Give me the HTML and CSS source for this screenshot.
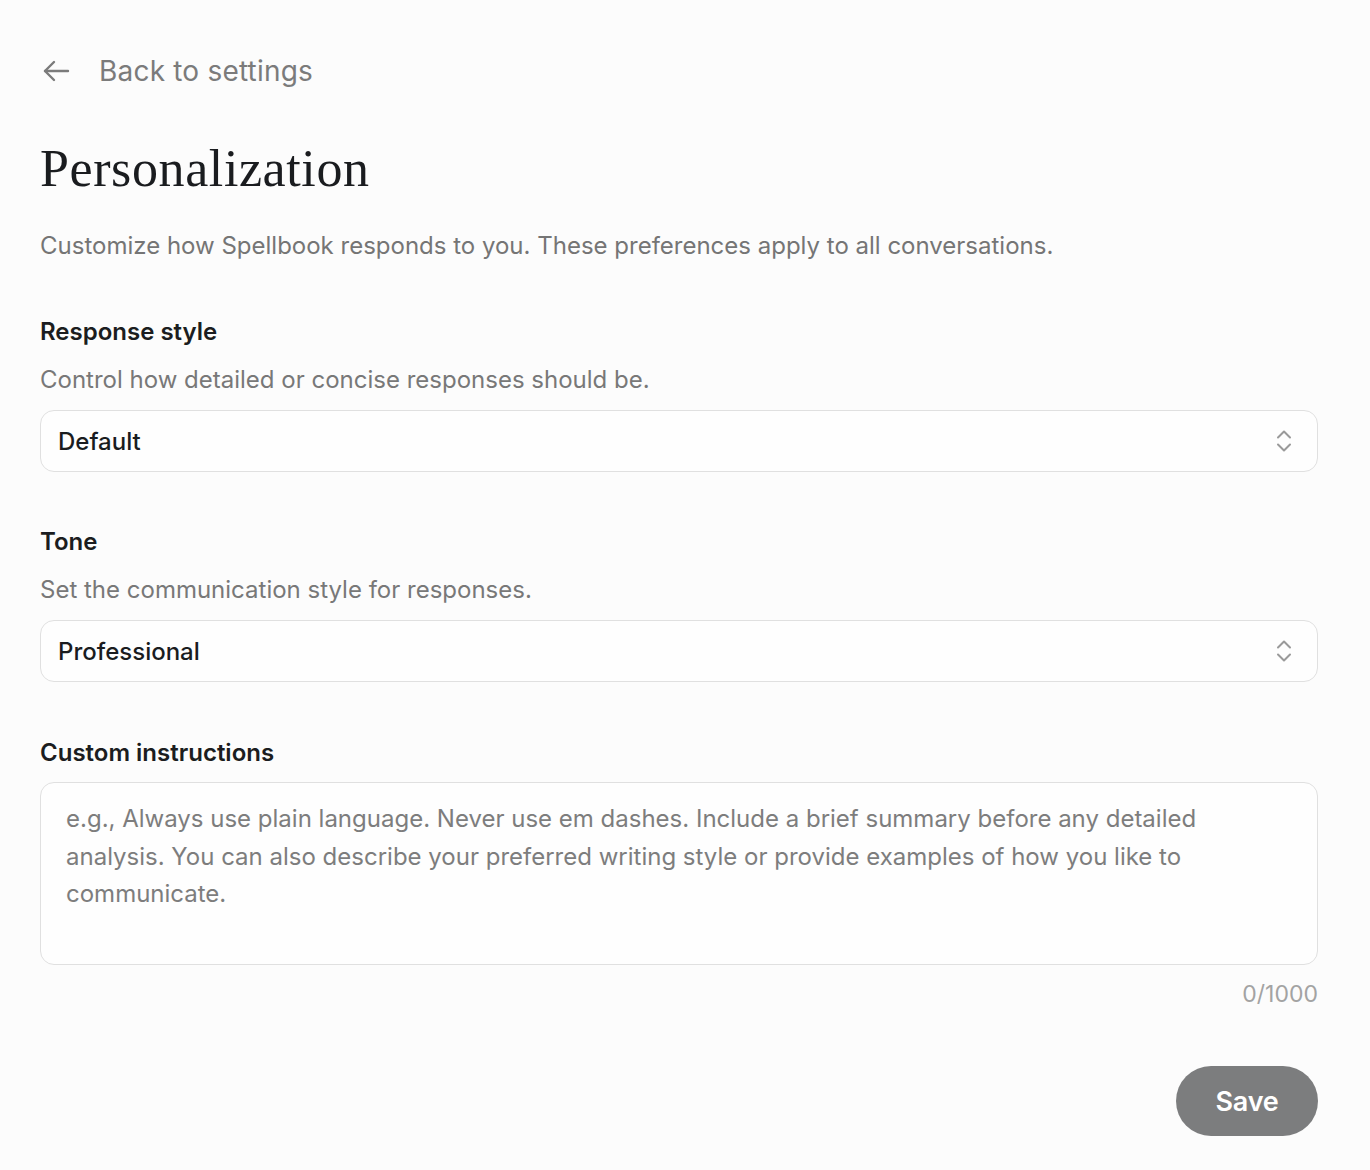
FILE: index.html
```html
<!DOCTYPE html>
<html lang="en">
<head>
<meta charset="utf-8">
<title>Personalization</title>
<link rel="stylesheet" href="styles.css">
</head>
<body>
<main class="page">
  <a class="back" href="#">
    <svg class="back-icon" width="32" height="32" viewBox="0 0 32 32" fill="none" stroke="currentColor" stroke-width="2.4" stroke-linecap="round" stroke-linejoin="round"><path d="M28 16H5"/><path d="M14 7L5 16l9 9"/></svg>
    <span>Back to settings</span>
  </a>
  <h1 class="title">Personalization</h1>
  <p class="intro">Customize how Spellbook responds to you. These preferences apply to all conversations.</p>

  <section class="field">
    <h2 class="label">Response style</h2>
    <p class="hint">Control how detailed or concise responses should be.</p>
    <div class="select">
      <span>Default</span>
      <svg class="chev" width="18" height="26" viewBox="0 0 18 26" fill="none" stroke="currentColor" stroke-width="2" stroke-linecap="round" stroke-linejoin="round"><path d="M3 9.5l6-6 6 6"/><path d="M3 16.5l6 6 6-6"/></svg>
    </div>
  </section>

  <section class="field">
    <h2 class="label">Tone</h2>
    <p class="hint">Set the communication style for responses.</p>
    <div class="select">
      <span>Professional</span>
      <svg class="chev" width="18" height="26" viewBox="0 0 18 26" fill="none" stroke="currentColor" stroke-width="2" stroke-linecap="round" stroke-linejoin="round"><path d="M3 9.5l6-6 6 6"/><path d="M3 16.5l6 6 6-6"/></svg>
    </div>
  </section>

  <section class="field field-custom">
    <h2 class="label">Custom instructions</h2>
    <div class="textarea">e.g., Always use plain language. Never use em dashes. Include a brief summary before any detailed analysis. You can also describe your preferred writing style or provide examples of how you like to communicate.</div>
    <div class="counter">0/1000</div>
  </section>

  <div class="actions">
    <button class="save" type="button">Save</button>
  </div>
</main>
</body>
</html>
```

FILE: styles.css
```css
html, body {
  margin: 0;
  padding: 0;
  background: #fcfcfc;
}
body {
  font-family: Inter, "Noto Sans", "Liberation Sans", sans-serif;
  color: #1b1d20;
}
.page {
  padding: 52px 52px 0 40px;
}
.back {
  display: flex;
  align-items: center;
  gap: 27px;
  height: 38px;
  color: #7b7b7b;
  text-decoration: none;
  font-size: 28px;
  letter-spacing: 0.2px;
}
.back-icon {
  width: 32px;
  height: 32px;
  flex: none;
}
.title {
  font-family: "Liberation Serif", "DejaVu Serif", serif;
  font-weight: 400;
  font-size: 52px;
  line-height: 64px;
  margin: 47px 0 0;
  color: #1a1c1f;
  letter-spacing: 0.6px;
}
.intro {
  font-size: 24px;
  line-height: 32px;
  color: #757575;
  margin: 29px 0 0;
}
.field {
  margin-top: 54px;
}
.label {
  font-size: 24px;
  font-weight: 600;
  line-height: 32px;
  margin: 0;
  color: #1b1d20;
}
.hint {
  font-size: 24px;
  line-height: 32px;
  color: #787878;
  margin: 16px 0 0;
}
.select {
  margin-top: 14px;
  height: 60px;
  border: 1.5px solid #e0e0e0;
  border-radius: 14px;
  background: #fefefe;
  display: flex;
  align-items: center;
  justify-content: space-between;
  padding: 0 24px 0 17px;
  font-size: 24px;
  font-weight: 500;
  color: #1a1c1f;
}
.chev {
  color: #9a9a9a;
  width: 18px;
  height: 26px;
}
.field-custom {
  margin-top: 55px;
}
.textarea {
  margin-top: 13px;
  height: 183px;
  box-sizing: border-box;
  border: 1.5px solid #e0e0e0;
  border-radius: 14px;
  background: #fefefe;
  padding: 17px 100px 0 25px;
  font-size: 24px;
  line-height: 37.5px;
  color: #7d7d7d;
}
.counter {
  text-align: right;
  font-size: 23px;
  line-height: 30px;
  color: #a3a3a3;
  margin-top: 14px;
}
.actions {
  display: flex;
  justify-content: flex-end;
  margin-top: 57px;
}
.save {
  width: 142px;
  height: 70px;
  border: none;
  border-radius: 35px;
  background: #7c7d7e;
  color: #ffffff;
  font-family: Inter, "Noto Sans", "Liberation Sans", sans-serif;
  font-size: 27px;
  font-weight: 600;
  letter-spacing: -0.2px;
}
```
